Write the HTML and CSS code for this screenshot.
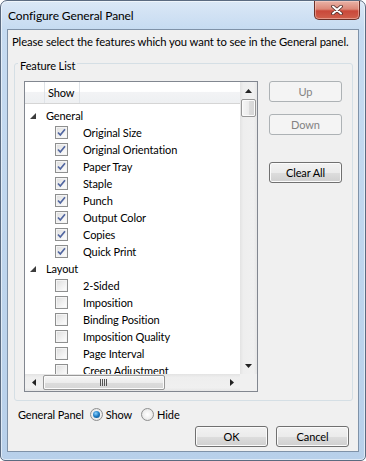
FILE: index.html
```html
<!DOCTYPE html>
<html lang="en">
<head>
    <meta charset="UTF-8">
    <title>Configure General Panel</title>
    <link rel="stylesheet" href="styles.css">
</head>
<body>

<div class="window">
    <div class="titlebar">
        <span class="title">Configure General Panel</span>
        <button class="close-btn">
            <svg width="12" height="10" viewBox="0 0 12 10">
                <path d="M2 1.5 L10 8.5 M10 1.5 L2 8.5" stroke="#4a2a26" stroke-width="3.6" stroke-linecap="round"/>
                <path d="M2 1.5 L10 8.5 M10 1.5 L2 8.5" stroke="#fff" stroke-width="2" stroke-linecap="round"/>
            </svg>
        </button>
    </div>

    <div class="client">
        <p class="intro">Please select the features which you want to see in the General panel.</p>

        <fieldset class="group">
            <legend>Feature List</legend>
            <div class="group-body">
                <div class="listview">
                    <div class="list-area">
                        <div class="list-header">
                            <span class="col col-icon"></span>
                            <span class="col col-show">Show</span>
                            <span class="col col-rest"></span>
                        </div>
                        <div class="list-rows">
                            <div class="row group-row">
                                <svg class="expander" width="6" height="6" viewBox="0 0 6 6"><polygon points="6,0 6,6 0,6" fill="#3c3c3c"/></svg>General
                            </div>
                            <div class="row item-row"><span class="check"><svg width="11" height="11" viewBox="0 0 11 11"><path d="M2 5.5 L4.3 8 L9 2.2" fill="none" stroke="#5166a0" stroke-width="1.7"/></svg></span>Original Size</div>
                            <div class="row item-row"><span class="check"><svg width="11" height="11" viewBox="0 0 11 11"><path d="M2 5.5 L4.3 8 L9 2.2" fill="none" stroke="#5166a0" stroke-width="1.7"/></svg></span>Original Orientation</div>
                            <div class="row item-row"><span class="check"><svg width="11" height="11" viewBox="0 0 11 11"><path d="M2 5.5 L4.3 8 L9 2.2" fill="none" stroke="#5166a0" stroke-width="1.7"/></svg></span>Paper Tray</div>
                            <div class="row item-row"><span class="check"><svg width="11" height="11" viewBox="0 0 11 11"><path d="M2 5.5 L4.3 8 L9 2.2" fill="none" stroke="#5166a0" stroke-width="1.7"/></svg></span>Staple</div>
                            <div class="row item-row"><span class="check"><svg width="11" height="11" viewBox="0 0 11 11"><path d="M2 5.5 L4.3 8 L9 2.2" fill="none" stroke="#5166a0" stroke-width="1.7"/></svg></span>Punch</div>
                            <div class="row item-row"><span class="check"><svg width="11" height="11" viewBox="0 0 11 11"><path d="M2 5.5 L4.3 8 L9 2.2" fill="none" stroke="#5166a0" stroke-width="1.7"/></svg></span>Output Color</div>
                            <div class="row item-row"><span class="check"><svg width="11" height="11" viewBox="0 0 11 11"><path d="M2 5.5 L4.3 8 L9 2.2" fill="none" stroke="#5166a0" stroke-width="1.7"/></svg></span>Copies</div>
                            <div class="row item-row"><span class="check"><svg width="11" height="11" viewBox="0 0 11 11"><path d="M2 5.5 L4.3 8 L9 2.2" fill="none" stroke="#5166a0" stroke-width="1.7"/></svg></span>Quick Print</div>
                            <div class="row group-row">
                                <svg class="expander" width="6" height="6" viewBox="0 0 6 6"><polygon points="6,0 6,6 0,6" fill="#3c3c3c"/></svg>Layout
                            </div>
                            <div class="row item-row"><span class="check"></span>2-Sided</div>
                            <div class="row item-row"><span class="check"></span>Imposition</div>
                            <div class="row item-row"><span class="check"></span>Binding Position</div>
                            <div class="row item-row"><span class="check"></span>Imposition Quality</div>
                            <div class="row item-row"><span class="check"></span>Page Interval</div>
                            <div class="row item-row"><span class="check"></span>Creep Adjustment</div>
                        </div>
                    </div>

                    <div class="vscroll">
                        <div class="arrow-box">
                            <svg width="7" height="4" viewBox="0 0 7 4"><polygon points="3.5,0 7,4 0,4" fill="#222"/></svg>
                        </div>
                        <div class="vthumb"></div>
                        <div class="track"></div>
                        <div class="arrow-box">
                            <svg width="7" height="4" viewBox="0 0 7 4"><polygon points="0,0 7,0 3.5,4" fill="#222"/></svg>
                        </div>
                    </div>

                    <div class="hscroll">
                        <div class="arrow-box">
                            <svg width="4" height="7" viewBox="0 0 4 7"><polygon points="4,0 4,7 0,3.5" fill="#222"/></svg>
                        </div>
                        <div class="hthumb">
                            <svg width="8" height="7" viewBox="0 0 8 7">
                                <path d="M0.5 0 V7 M2.5 0 V7 M4.5 0 V7 M6.5 0 V7" stroke="#555" stroke-width="1"/>
                            </svg>
                        </div>
                        <div class="track"></div>
                        <div class="arrow-box">
                            <svg width="4" height="7" viewBox="0 0 4 7"><polygon points="0,0 4,3.5 0,7" fill="#222"/></svg>
                        </div>
                    </div>

                    <div class="corner"></div>
                </div>

                <div class="side-buttons">
                    <button class="btn" disabled>Up</button>
                    <button class="btn btn-down" disabled>Down</button>
                    <button class="btn btn-clear">Clear All</button>
                </div>
            </div>
        </fieldset>

        <div class="panel-mode">
            <span class="mode-label">General Panel</span>
            <label class="radio"><span class="radio-dot on"></span>Show</label>
            <label class="radio"><span class="radio-dot"></span>Hide</label>
        </div>

        <div class="dialog-buttons">
            <button class="btn">OK</button>
            <button class="btn">Cancel</button>
        </div>
    </div>
</div>

</body>
</html>
```

FILE: styles.css
```css
* {
    box-sizing: border-box;
}

body {
    margin: 0;
    background: #fff;
    font-family: Lato, "Open Sans", sans-serif;
    font-size: 11px;
    letter-spacing: -0.1px;
    color: #000;
}

.window {
    width: 366px;
    height: 461px;
    display: flex;
    flex-direction: column;
    padding: 0 6px 8px;
    border: 1px solid #5b6b80;
    border-radius: 7px 7px 5px 5px;
    background: linear-gradient(180deg, #dbe8f6 0%, #c6dbf1 28px, #bed5ed 60%, #b8d0ea 100%);
    box-shadow: inset 0 0 0 1px rgba(255, 255, 255, 0.55);
}

.titlebar {
    height: 28px;
    display: flex;
    align-items: flex-start;
}

.title {
    padding: 7px 0 0 1px;
    line-height: 15px;
    font-size: 12px;
}

.close-btn {
    margin-left: auto;
    margin-right: -1px;
    width: 46px;
    height: 19px;
    padding: 0;
    display: flex;
    align-items: center;
    justify-content: center;
    border: 1px solid #6b3028;
    border-top: none;
    border-radius: 0 0 5px 5px;
    background: linear-gradient(180deg, #e9b3a7 0%, #dc8878 45%, #c9483a 55%, #d0604c 100%);
    box-shadow: inset 0 0 0 1px rgba(255, 220, 210, 0.45);
}

.client {
    flex: 1;
    display: flex;
    flex-direction: column;
    border: 1px solid #7f92a8;
    background: #f0f0f0;
}

.intro {
    margin: 4px 0 0 4px;
    line-height: 15px;
    font-size: 11.25px;
    white-space: nowrap;
}

.group {
    margin: 4px 5px 0 6px;
    padding: 8px 10px 8px 9px;
    min-width: 0;
    border: 1px solid #d5dfe5;
    border-radius: 3px;
}

.group legend {
    margin-left: -6px;
    padding: 5px 2px 0;
    line-height: 15px;
}

.group-body {
    display: flex;
    align-items: flex-start;
}

.listview {
    width: 234px;
    height: 311px;
    display: grid;
    grid-template-columns: 215px 17px;
    grid-template-rows: 292px 17px;
    border: 1px solid #828790;
    background: #fff;
}

.list-area {
    overflow: hidden;
}

.list-header {
    height: 22px;
    display: flex;
    border-bottom: 1px solid #d5d5d5;
    background: linear-gradient(180deg, #ffffff 0%, #ffffff 45%, #f2f3f5 50%, #eef0f2 100%);
}

.col {
    border-right: 1px solid #dfe3e8;
    line-height: 22px;
}

.col-icon {
    width: 20px;
}

.col-show {
    width: 35px;
    padding-left: 3px;
}

.col-rest {
    flex: 1;
    border-right: none;
}

.list-rows {
    padding-top: 3px;
}

.row {
    height: 17px;
    display: flex;
    align-items: center;
    white-space: nowrap;
}

.group-row {
    padding-left: 5px;
}

.expander {
    margin-right: 10px;
}

.item-row {
    padding-left: 30px;
}

.check {
    width: 13px;
    height: 13px;
    margin-right: 15px;
    display: flex;
    align-items: center;
    justify-content: center;
    border: 1px solid #8e8f8f;
    background: linear-gradient(135deg, #dcdcdc 0%, #f2f2f2 60%, #ffffff 100%);
    box-shadow: inset 0 0 0 1px #f4f4f4;
}

.vscroll {
    display: flex;
    flex-direction: column;
    background: linear-gradient(90deg, #e3e3e3 0%, #eeeeee 20%, #f0f0f0 80%, #e6e6e6 100%);
}

.hscroll {
    display: flex;
    background: linear-gradient(180deg, #e3e3e3 0%, #eeeeee 20%, #f0f0f0 80%, #e6e6e6 100%);
}

.arrow-box {
    flex: 0 0 17px;
    height: 17px;
    width: 17px;
    display: flex;
    align-items: center;
    justify-content: center;
}

.track {
    flex: 1;
}

.vthumb {
    height: 18px;
    margin: 0 1px;
    border: 1px solid #979797;
    border-radius: 2px;
    background: linear-gradient(90deg, #f6f6f6 0%, #ececec 50%, #dcdcdc 51%, #d6d6d6 100%);
    box-shadow: inset 0 0 0 1px #fbfbfb;
}

.hthumb {
    width: 122px;
    height: 15px;
    margin: 1px 0 0 1px;
    display: flex;
    align-items: center;
    justify-content: center;
    border: 1px solid #979797;
    border-radius: 2px;
    background: linear-gradient(180deg, #f6f6f6 0%, #ececec 50%, #dcdcdc 51%, #d6d6d6 100%);
    box-shadow: inset 0 0 0 1px #fbfbfb;
}

.corner {
    background: #f0f0f0;
}

.side-buttons {
    margin-left: 11px;
    display: flex;
    flex-direction: column;
}

.btn {
    width: 73px;
    height: 21px;
    padding: 0;
    font-family: inherit;
    font-size: 11px;
    letter-spacing: inherit;
    color: #000;
    border: 1px solid #707070;
    border-radius: 3px;
    background: linear-gradient(180deg, #f2f2f2 0%, #ebebeb 50%, #dddddd 51%, #cfcfcf 100%);
    box-shadow: inset 0 0 0 1px #fbfbfb;
}

.btn:disabled {
    color: #838383;
    border-color: #adb2b5;
    background: #f4f4f4;
    box-shadow: none;
}

.btn-down {
    margin-top: 12px;
}

.btn-clear {
    margin-top: 27px;
}

.panel-mode {
    margin: 6px 0 0 10px;
    display: flex;
    align-items: center;
    line-height: 15px;
}

.mode-label {
    margin-right: 6px;
}

.radio {
    display: flex;
    align-items: center;
    margin-right: 9px;
}

.radio-dot {
    width: 13px;
    height: 13px;
    margin-right: 3px;
    display: flex;
    align-items: center;
    justify-content: center;
    border: 1px solid #8e8f8f;
    border-radius: 50%;
    background: radial-gradient(circle at 50% 50%, #ffffff 0%, #f0f0f0 50%, #d8d8d8 100%);
}

.radio-dot.on::after {
    content: "";
    width: 7px;
    height: 7px;
    border-radius: 50%;
    background: radial-gradient(circle at 40% 35%, #8ad2ff 0%, #1d7ac2 50%, #0b4a80 100%);
}

.dialog-buttons {
    margin: 4px 9px 0 0;
    display: flex;
    justify-content: flex-end;
    gap: 8px;
}
```
